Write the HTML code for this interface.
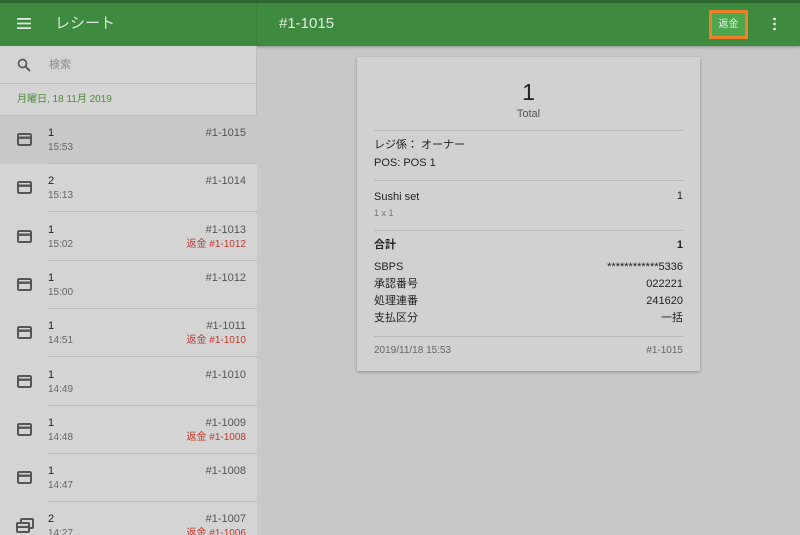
<!DOCTYPE html>
<html><head><meta charset="utf-8"><style>
*{margin:0;padding:0;box-sizing:border-box}
html,body{width:800px;height:535px;overflow:hidden}
body{font-family:"Liberation Sans","Noto Sans CJK JP",sans-serif;background:#c8c8c8;position:relative;color:#222}
.top{position:absolute;left:0;top:0;width:800px;height:3px;background:#2f6b30}
.hdr{position:absolute;left:0;top:3px;width:800px;height:43px;background:#3e8a3f;box-shadow:0 1px 3px rgba(0,0,0,.3)}
.hdrl{position:absolute;left:0;top:3px;width:257px;height:43px;border-right:1px solid #3a7f3a}
.left{position:absolute;left:0;top:46px;width:257px;height:489px;background:#d4d4d4;border-right:1px solid #bdbdbd}
.t{position:absolute;white-space:nowrap;line-height:14px}
.row{position:absolute;left:0;width:257px;height:48px}
.row .sep{position:absolute;left:48px;right:0;bottom:0;height:1px;background:#bcbcbc}
.card{position:absolute;left:357px;top:57px;width:343px;height:314px;background:#d1d1d1;box-shadow:0 1px 3px rgba(0,0,0,.3)}
.hl{position:absolute;left:17px;right:17px;height:1px;background:#b8b8b8}
.c{font-size:11px;color:#222}
</style></head><body>
<div class="top"></div>
<div class="hdr"></div>
<div class="hdrl"></div>
<svg class="t" style="left:17px;top:18px" width="14" height="11"><rect y="0" width="14" height="1.8" fill="#dfe9df"/><rect y="4.6" width="14" height="1.8" fill="#dfe9df"/><rect y="9.2" width="14" height="1.8" fill="#dfe9df"/></svg>
<div class="t" style="left:55px;top:17px;font-size:15px;color:#dfe9df">レシート</div>
<div class="t" style="left:279px;top:17px;font-size:15px;color:#e4ece4">#1-1015</div>
<div class="t" style="left:709px;top:10px;width:39px;height:29px;background:#4ea64e;border:3px solid #f07f2a;font-size:10px;color:#e8f2e8;text-align:center;line-height:23px">返金</div>
<svg class="t" style="left:772px;top:17px" width="5" height="14"><circle cx="2.5" cy="2" r="1.4" fill="#dfe9df"/><circle cx="2.5" cy="7" r="1.4" fill="#dfe9df"/><circle cx="2.5" cy="12" r="1.4" fill="#dfe9df"/></svg>
<div class="left">
<svg class="t" style="left:17px;top:12px" width="14" height="14"><circle cx="5.5" cy="5.5" r="4" stroke="#555" stroke-width="1.7" fill="none"/><line x1="8.5" y1="8.5" x2="13" y2="13" stroke="#555" stroke-width="1.9"/></svg>
<div class="t" style="left:49px;top:12px;font-size:11px;color:#8a8a8a">検索</div>
<div style="position:absolute;left:0;top:37px;width:257px;height:1px;background:#bcbcbc"></div>
<div class="t" style="left:17px;top:47px;font-size:10px;color:#4f8a3a">月曜日, 18 11月 2019</div>
<div style="position:absolute;left:0;top:69px;width:257px;height:1px;background:#bcbcbc"></div>
</div>
<div id="rows"></div>
<script>
var d=[["1","15:53","#1-1015",""],["2","15:13","#1-1014",""],["1","15:02","#1-1013","返金 #1-1012"],["1","15:00","#1-1012",""],["1","14:51","#1-1011","返金 #1-1010"],["1","14:49","#1-1010",""],["1","14:48","#1-1009","返金 #1-1008"],["1","14:47","#1-1008",""],["2","14:27","#1-1007","返金 #1-1006"]];
var h="";d.forEach(function(r,i){var y=116+i*48.3;
var icon=i==8?'<svg class="t" style="left:16px;top:16px" width="18" height="16"><rect x="5" y="1" width="12" height="9" rx="1" stroke="#555" stroke-width="2" fill="none"/><rect x="1" y="5" width="12" height="9" rx="1" stroke="#555" stroke-width="2" fill="#d4d4d4"/><rect x="1" y="8" width="12" height="2" fill="#555"/></svg>':'<svg class="t" style="left:17px;top:17px" width="15" height="13"><rect x="1" y="1" width="13" height="11" rx="1.2" stroke="#555" stroke-width="2" fill="none"/><rect x="1" y="3.5" width="13" height="2.4" fill="#555"/></svg>';
h+='<div class="row" style="top:'+y+'px;'+(i==0?'background:#c8c8c8':'background:#d4d4d4')+'">'+icon+
'<div class="t" style="left:48px;top:10px;font-size:11px;color:#222">'+r[0]+'</div><div class="t" style="left:48px;top:25px;font-size:10px;color:#666">'+r[1]+'</div>'+
'<div class="t" style="right:11px;top:10px;font-size:11px;color:#555">'+r[2]+'</div>'+(r[3]?'<div class="t" style="right:11px;top:25px;font-size:10px;color:#c0392b">'+r[3]+'</div>':'')+'<div class="sep"></div></div>';});
document.getElementById('rows').innerHTML=h;
</script>
<div class="card">
<div class="t" style="left:0;width:343px;text-align:center;top:22px;font-size:23px;line-height:26px;color:#222">1</div>
<div class="t" style="left:0;width:343px;text-align:center;top:50px;font-size:11px;color:#555">Total</div>
<div class="hl" style="top:73px"></div>
<div class="t c" style="left:17px;top:81px">レジ係： オーナー</div>
<div class="t c" style="left:17px;top:99px">POS: POS 1</div>
<div class="hl" style="top:123px"></div>
<div class="t c" style="left:17px;top:133px">Sushi set</div>
<div class="t c" style="right:17px;top:132px">1</div>
<div class="t" style="left:17px;top:149px;font-size:9px;color:#777">1 x 1</div>
<div class="hl" style="top:173px"></div>
<div class="t c" style="left:17px;top:181px;font-weight:bold">合計</div>
<div class="t c" style="right:17px;top:181px;font-weight:bold">1</div>
<div class="t c" style="left:17px;top:203px">SBPS</div>
<div class="t c" style="right:17px;top:203px">************5336</div>
<div class="t c" style="left:17px;top:220px">承認番号</div>
<div class="t c" style="right:17px;top:220px">022221</div>
<div class="t c" style="left:17px;top:237px">処理連番</div>
<div class="t c" style="right:17px;top:237px">241620</div>
<div class="t c" style="left:17px;top:254px">支払区分</div>
<div class="t c" style="right:17px;top:254px">一括</div>
<div class="hl" style="top:279px"></div>
<div class="t" style="left:17px;top:287px;font-size:10px;color:#666">2019/11/18 15:53</div>
<div class="t" style="right:17px;top:287px;font-size:10px;color:#666">#1-1015</div>
</div>
</body></html>
